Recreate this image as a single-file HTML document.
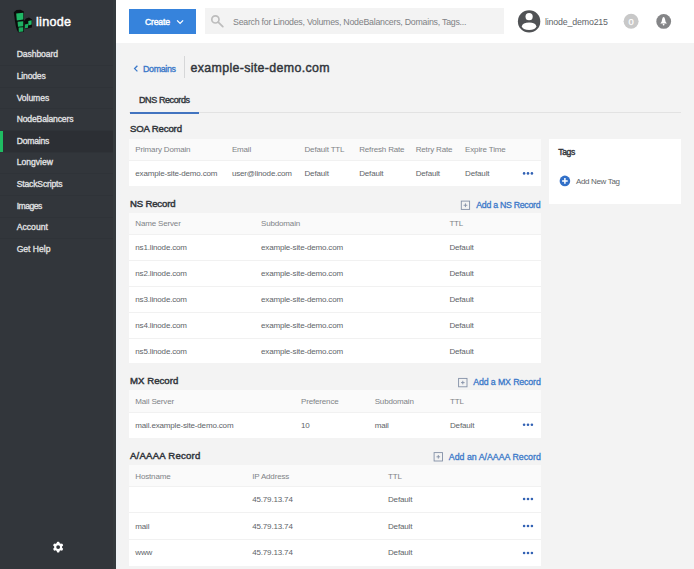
<!DOCTYPE html>
<html><head><meta charset="utf-8">
<style>
html,body{margin:0;padding:0;}
body{width:694px;height:569px;overflow:hidden;position:relative;background:#f3f3f3;font-family:"Liberation Sans",sans-serif;}
.t{position:absolute;white-space:nowrap;}
.a{position:absolute;}
.tbl{position:absolute;left:129px;width:412px;background:#fff;}
.th{position:absolute;left:0;width:100%;background:#fafafa;}
.rl{position:absolute;left:0;width:100%;height:1px;background:#f1f1f1;}
.ns{position:absolute;left:0;width:113px;height:1px;background:#2f3338;}
</style></head><body>
<div class="a" style="left:0;top:0;width:116px;height:569px;background:#32363b"></div>
<div class="a" style="left:113px;top:0;width:3px;height:569px;background:#343a3e"></div>
<div class="a" style="left:116px;top:0;width:5px;height:569px;background:linear-gradient(to right,#eff3f7,#f3f3f3)"></div>
<div class="a" style="left:0;top:130.4px;width:113px;height:21.6px;background:#2c2f34"></div>
<div class="a" style="left:0;top:129.5px;width:3px;height:22.5px;background:#1fbc62"></div>
<div class="ns" style="top:65px"></div>
<div class="ns" style="top:87px"></div>
<div class="ns" style="top:108px"></div>
<div class="ns" style="top:130px"></div>
<div class="ns" style="top:152px"></div>
<div class="ns" style="top:173px"></div>
<div class="ns" style="top:195px"></div>
<div class="ns" style="top:217px"></div>
<div class="ns" style="top:238px"></div>
<!-- logo -->
<svg class="a" style="left:0;top:0" width="40" height="40" viewBox="0 0 40 40">
  <polygon points="13.8,12.2 16.5,10 20.5,9.8 23.9,11.4 23.9,32 18.2,32.3 16.8,29.5 15.8,26 14.8,20" fill="#0b0d0c"/>
  <polygon points="16.2,13.6 23.3,12.8 23.3,19.6 16.8,20.4" fill="#20b866"/>
  <polygon points="17.6,21.8 23.2,21.2 23.2,26.2 18,26.8" fill="#1db162"/>
  <polygon points="18.6,27.6 23.2,27.2 23.2,31.6 18.8,32" fill="#1bab5d"/>
  <polygon points="24,21 26,18.6 29,17.6 32.1,19.4 31.9,27.6 27.6,28.6 24.6,28.5" fill="#0b0d0c"/>
  <polygon points="28.3,21 31.6,20.2 31.6,24.6 28.3,25.4" fill="#20b866"/>
  <polygon points="24.9,24.6 28,23.8 28,27.8 24.9,28.2" fill="#1bab5d"/>
</svg>
<!-- gear -->
<svg class="a" style="left:50px;top:539px" width="16" height="16" viewBox="0 0 16 16">
  <g transform="translate(8.15,8.1)" fill="#fff">
    <circle r="4"/>
    <rect x="-1.35" y="-5.3" width="2.7" height="10.6" rx="0.9"/>
    <rect x="-1.35" y="-5.3" width="2.7" height="10.6" rx="0.9" transform="rotate(60)"/>
    <rect x="-1.35" y="-5.3" width="2.7" height="10.6" rx="0.9" transform="rotate(120)"/>
    <circle r="1.9" fill="#32363b"/>
  </g>
</svg>

<div class="a" style="left:116px;top:0;width:578px;height:42.5px;background:#fff"></div>
<div class="a" style="left:129px;top:9px;width:67px;height:25px;background:#3683dc"></div>
<svg class="a" style="left:170px;top:15px" width="20" height="15" viewBox="170 15 20 15"><polyline points="177.1,20.4 180.1,23.4 183.1,20.4" fill="none" stroke="#fff" stroke-width="1.3"/></svg>
<div class="a" style="left:205px;top:8px;width:299px;height:25.5px;background:#f3f3f3"></div>
<svg class="a" style="left:205px;top:8px" width="25" height="25" viewBox="205 8 25 25">
  <circle cx="215.4" cy="19.4" r="3.6" fill="none" stroke="#bdbdbd" stroke-width="1.7"/>
  <line x1="218.2" y1="22.2" x2="222.8" y2="26.6" stroke="#bdbdbd" stroke-width="1.8" stroke-linecap="round"/>
</svg>
<svg class="a" style="left:515px;top:8px" width="30" height="28" viewBox="515 8 30 28">
  <defs><clipPath id="av"><circle cx="529.1" cy="21.4" r="11.2"/></clipPath></defs>
  <circle cx="529.1" cy="21.4" r="11.2" fill="#505255"/>
  <circle cx="529.1" cy="16.7" r="3.6" fill="#fff"/>
  <ellipse cx="529.1" cy="26.3" rx="7.2" ry="3.8" fill="#fff" clip-path="url(#av)"/>
</svg>
<svg class="a" style="left:620px;top:10px" width="60" height="24" viewBox="620 10 60 24">
  <circle cx="631.1" cy="21.3" r="7.5" fill="#c8c8c8"/>
  <text x="631.1" y="24.6" font-family="Liberation Sans" font-size="9.4" fill="#fff" text-anchor="middle" stroke="#fff" stroke-width="0.25">0</text>
  <circle cx="663.7" cy="21.4" r="7.4" fill="#848587"/>
  <path d="M663.6,17.1 Q662.6,17.3 662.2,18.9 L661.6,21.8 L660.3,23.6 L666.9,23.6 L665.6,21.8 L665,18.9 Q664.6,17.3 663.6,17.1 Z" fill="#fff"/>
  <circle cx="663.6" cy="24.6" r="0.9" fill="#fff"/>
</svg>

<!-- breadcrumb -->
<svg class="a" style="left:130px;top:60px" width="12" height="16" viewBox="130 60 12 16"><polyline points="137.4,65.8 134.6,68.6 137.4,71.4" fill="none" stroke="#3a78c9" stroke-width="1.3"/></svg>
<div class="a" style="left:184px;top:56px;width:1px;height:22px;background:#d6d7d8"></div>
<!-- tabs -->
<div class="a" style="left:129px;top:112px;width:552px;height:1px;background:#e2e2e2"></div>
<div class="a" style="left:129.6px;top:111.8px;width:69px;height:1.8px;background:#4274c0"></div>

<!-- SOA table -->
<div class="tbl" style="top:139px;height:47px">
  <div class="th" style="top:0;height:20.5px"></div>
  <div class="rl" style="top:20.5px"></div>
</div>
<!-- tags panel -->
<div class="a" style="left:549px;top:139px;width:132px;height:64.5px;background:#fff"></div>
<svg class="a" style="left:555px;top:172px" width="20" height="18" viewBox="555 172 20 18">
  <circle cx="564.9" cy="180.9" r="5.3" fill="#3270c8"/>
  <path d="M564.9,178.1 V183.7 M562.1,180.9 H567.7" stroke="#fff" stroke-width="1.5"/>
</svg>

<!-- NS table -->
<div class="tbl" style="top:212.5px;height:150.5px">
  <div class="th" style="top:0;height:21.5px"></div>
  <div class="rl" style="top:21.5px"></div>
  <div class="rl" style="top:47px"></div>
  <div class="rl" style="top:73px"></div>
  <div class="rl" style="top:99px"></div>
  <div class="rl" style="top:125px"></div>
</div>
<!-- MX table -->
<div class="tbl" style="top:390px;height:48px">
  <div class="th" style="top:0;height:21.5px"></div>
  <div class="rl" style="top:21.5px"></div>
</div>
<!-- A table -->
<div class="tbl" style="top:465px;height:100.5px">
  <div class="th" style="top:0;height:20.5px"></div>
  <div class="rl" style="top:20.5px"></div>
  <div class="rl" style="top:47px"></div>
  <div class="rl" style="top:73.5px"></div>
</div>

<!-- icons: add squares and dots -->
<svg class="a" style="left:0;top:0" width="694" height="569" viewBox="0 0 694 569">
  <g fill="none" stroke="#8390a6" stroke-width="0.9">
    <rect x="461.3" y="201.1" width="8.3" height="8.3"/>
    <path d="M465.45,203.4 V207.1 M463.6,205.25 H467.3"/>
    <rect x="458.6" y="378.4" width="8.4" height="8.4"/>
    <path d="M462.8,380.8 V384.4 M461,382.6 H464.6"/>
    <rect x="434.1" y="452.6" width="8.4" height="8.4"/>
    <path d="M438.3,455 V458.6 M436.5,456.8 H440.1"/>
  </g>
  <g fill="#3262b4">
    <circle cx="524.1" cy="173.4" r="1.3"/><circle cx="528" cy="173.4" r="1.3"/><circle cx="531.9" cy="173.4" r="1.3"/>
    <circle cx="524.1" cy="424.8" r="1.3"/><circle cx="528" cy="424.8" r="1.3"/><circle cx="531.9" cy="424.8" r="1.3"/>
    <circle cx="524.1" cy="499" r="1.3"/><circle cx="528" cy="499" r="1.3"/><circle cx="531.9" cy="499" r="1.3"/>
    <circle cx="524.1" cy="526" r="1.3"/><circle cx="528" cy="526" r="1.3"/><circle cx="531.9" cy="526" r="1.3"/>
    <circle cx="524.1" cy="553" r="1.3"/><circle cx="528" cy="553" r="1.3"/><circle cx="531.9" cy="553" r="1.3"/>
  </g>
</svg>
<div class="t" style="left:36px;top:16px;font-size:12.6px;line-height:12.6px;color:#fff;-webkit-text-stroke:0.45px #fff;letter-spacing:0.275px;">linode</div>
<div class="t" style="left:16.7px;top:50px;font-size:8.6px;line-height:8.6px;color:#dcdddf;-webkit-text-stroke:0.4px #dcdddf;letter-spacing:-0.093px;">Dashboard</div>
<div class="t" style="left:16.7px;top:72px;font-size:8.6px;line-height:8.6px;color:#dcdddf;-webkit-text-stroke:0.4px #dcdddf;letter-spacing:-0.168px;">Linodes</div>
<div class="t" style="left:16.7px;top:94px;font-size:8.6px;line-height:8.6px;color:#dcdddf;-webkit-text-stroke:0.4px #dcdddf;letter-spacing:-0.078px;">Volumes</div>
<div class="t" style="left:16.7px;top:115px;font-size:8.6px;line-height:8.6px;color:#dcdddf;-webkit-text-stroke:0.4px #dcdddf;letter-spacing:-0.164px;">NodeBalancers</div>
<div class="t" style="left:16.7px;top:137px;font-size:8.6px;line-height:8.6px;color:#dcdddf;-webkit-text-stroke:0.4px #dcdddf;letter-spacing:-0.204px;">Domains</div>
<div class="t" style="left:16.7px;top:158px;font-size:8.6px;line-height:8.6px;color:#dcdddf;-webkit-text-stroke:0.4px #dcdddf;letter-spacing:-0.016px;">Longview</div>
<div class="t" style="left:16.7px;top:180px;font-size:8.6px;line-height:8.6px;color:#dcdddf;-webkit-text-stroke:0.4px #dcdddf;letter-spacing:-0.170px;">StackScripts</div>
<div class="t" style="left:16.7px;top:202px;font-size:8.6px;line-height:8.6px;color:#dcdddf;-webkit-text-stroke:0.4px #dcdddf;letter-spacing:-0.518px;">Images</div>
<div class="t" style="left:16.7px;top:223px;font-size:8.6px;line-height:8.6px;color:#dcdddf;-webkit-text-stroke:0.4px #dcdddf;letter-spacing:0.023px;">Account</div>
<div class="t" style="left:16.7px;top:245px;font-size:8.6px;line-height:8.6px;color:#dcdddf;-webkit-text-stroke:0.4px #dcdddf;letter-spacing:-0.017px;">Get Help</div>
<div class="t" style="left:145px;top:18px;font-size:8.7px;line-height:8.7px;color:#fff;-webkit-text-stroke:0.4px #fff;letter-spacing:-0.216px;">Create</div>
<div class="t" style="left:233px;top:18px;font-size:8.8px;line-height:8.8px;color:#808285;letter-spacing:-0.242px;">Search for Linodes, Volumes, NodeBalancers, Domains, Tags...</div>
<div class="t" style="left:545px;top:18px;font-size:8.8px;line-height:8.8px;color:#606468;letter-spacing:-0.159px;">linode_demo215</div>
<div class="t" style="left:143px;top:65px;font-size:8.9px;line-height:8.9px;color:#3a78c9;-webkit-text-stroke:0.35px #3a78c9;letter-spacing:-0.339px;">Domains</div>
<div class="t" style="left:190.5px;top:62px;font-size:12.4px;line-height:12.4px;color:#32363c;-webkit-text-stroke:0.45px #32363c;letter-spacing:0.339px;">example-site-demo.com</div>
<div class="t" style="left:139px;top:96px;font-size:9px;line-height:9px;color:#32363c;-webkit-text-stroke:0.4px #32363c;letter-spacing:-0.402px;">DNS Records</div>
<div class="t" style="left:130px;top:124px;font-size:9.6px;line-height:9.6px;color:#32363c;-webkit-text-stroke:0.45px #32363c;letter-spacing:-0.148px;">SOA Record</div>
<div class="t" style="left:130px;top:199px;font-size:9.6px;line-height:9.6px;color:#32363c;-webkit-text-stroke:0.45px #32363c;letter-spacing:-0.178px;">NS Record</div>
<div class="t" style="left:130px;top:376px;font-size:9.6px;line-height:9.6px;color:#32363c;-webkit-text-stroke:0.45px #32363c;letter-spacing:0.039px;">MX Record</div>
<div class="t" style="left:130px;top:451px;font-size:9.6px;line-height:9.6px;color:#32363c;-webkit-text-stroke:0.45px #32363c;letter-spacing:0.214px;">A/AAAA Record</div>
<div class="t" style="left:558.3px;top:148px;font-size:8.6px;line-height:8.6px;color:#32363c;-webkit-text-stroke:0.4px #32363c;letter-spacing:-0.385px;">Tags</div>
<div class="t" style="left:576px;top:178px;font-size:8px;line-height:8px;color:#606468;letter-spacing:-0.344px;">Add New Tag</div>
<div class="t" style="left:476.3px;top:201px;font-size:8.8px;line-height:8.8px;color:#3a78c9;-webkit-text-stroke:0.3px #3a78c9;letter-spacing:-0.298px;">Add a NS Record</div>
<div class="t" style="left:473.3px;top:378px;font-size:8.8px;line-height:8.8px;color:#3a78c9;-webkit-text-stroke:0.3px #3a78c9;letter-spacing:-0.138px;">Add a MX Record</div>
<div class="t" style="left:448.8px;top:453px;font-size:8.8px;line-height:8.8px;color:#3a78c9;-webkit-text-stroke:0.3px #3a78c9;letter-spacing:0.003px;">Add an A/AAAA Record</div>
<div class="t" style="left:135.3px;top:146px;font-size:8px;line-height:8px;color:#808387;letter-spacing:-0.160px;">Primary Domain</div>
<div class="t" style="left:231.9px;top:146px;font-size:8px;line-height:8px;color:#808387;letter-spacing:-0.160px;">Email</div>
<div class="t" style="left:304.5px;top:146px;font-size:8px;line-height:8px;color:#808387;letter-spacing:-0.160px;">Default TTL</div>
<div class="t" style="left:359.2px;top:146px;font-size:8px;line-height:8px;color:#808387;letter-spacing:-0.160px;">Refresh Rate</div>
<div class="t" style="left:415.7px;top:146px;font-size:8px;line-height:8px;color:#808387;letter-spacing:-0.160px;">Retry Rate</div>
<div class="t" style="left:465.1px;top:146px;font-size:8px;line-height:8px;color:#808387;letter-spacing:-0.160px;">Expire Time</div>
<div class="t" style="left:135.3px;top:170px;font-size:8px;line-height:8px;color:#606468;letter-spacing:-0.160px;">example-site-demo.com</div>
<div class="t" style="left:231.9px;top:170px;font-size:8px;line-height:8px;color:#606468;letter-spacing:-0.160px;">user@linode.com</div>
<div class="t" style="left:304.5px;top:170px;font-size:8px;line-height:8px;color:#606468;letter-spacing:-0.160px;">Default</div>
<div class="t" style="left:359.2px;top:170px;font-size:8px;line-height:8px;color:#606468;letter-spacing:-0.160px;">Default</div>
<div class="t" style="left:415.7px;top:170px;font-size:8px;line-height:8px;color:#606468;letter-spacing:-0.160px;">Default</div>
<div class="t" style="left:465.1px;top:170px;font-size:8px;line-height:8px;color:#606468;letter-spacing:-0.160px;">Default</div>
<div class="t" style="left:135.3px;top:220px;font-size:8px;line-height:8px;color:#808387;letter-spacing:-0.160px;">Name Server</div>
<div class="t" style="left:261px;top:220px;font-size:8px;line-height:8px;color:#808387;letter-spacing:-0.160px;">Subdomain</div>
<div class="t" style="left:449.4px;top:220px;font-size:8px;line-height:8px;color:#808387;letter-spacing:-0.160px;">TTL</div>
<div class="t" style="left:135.3px;top:244px;font-size:8px;line-height:8px;color:#606468;letter-spacing:-0.160px;">ns1.linode.com</div>
<div class="t" style="left:261px;top:244px;font-size:8px;line-height:8px;color:#606468;letter-spacing:-0.160px;">example-site-demo.com</div>
<div class="t" style="left:449.4px;top:244px;font-size:8px;line-height:8px;color:#606468;letter-spacing:-0.160px;">Default</div>
<div class="t" style="left:135.3px;top:270px;font-size:8px;line-height:8px;color:#606468;letter-spacing:-0.160px;">ns2.linode.com</div>
<div class="t" style="left:261px;top:270px;font-size:8px;line-height:8px;color:#606468;letter-spacing:-0.160px;">example-site-demo.com</div>
<div class="t" style="left:449.4px;top:270px;font-size:8px;line-height:8px;color:#606468;letter-spacing:-0.160px;">Default</div>
<div class="t" style="left:135.3px;top:296px;font-size:8px;line-height:8px;color:#606468;letter-spacing:-0.160px;">ns3.linode.com</div>
<div class="t" style="left:261px;top:296px;font-size:8px;line-height:8px;color:#606468;letter-spacing:-0.160px;">example-site-demo.com</div>
<div class="t" style="left:449.4px;top:296px;font-size:8px;line-height:8px;color:#606468;letter-spacing:-0.160px;">Default</div>
<div class="t" style="left:135.3px;top:322px;font-size:8px;line-height:8px;color:#606468;letter-spacing:-0.160px;">ns4.linode.com</div>
<div class="t" style="left:261px;top:322px;font-size:8px;line-height:8px;color:#606468;letter-spacing:-0.160px;">example-site-demo.com</div>
<div class="t" style="left:449.4px;top:322px;font-size:8px;line-height:8px;color:#606468;letter-spacing:-0.160px;">Default</div>
<div class="t" style="left:135.3px;top:348px;font-size:8px;line-height:8px;color:#606468;letter-spacing:-0.160px;">ns5.linode.com</div>
<div class="t" style="left:261px;top:348px;font-size:8px;line-height:8px;color:#606468;letter-spacing:-0.160px;">example-site-demo.com</div>
<div class="t" style="left:449.4px;top:348px;font-size:8px;line-height:8px;color:#606468;letter-spacing:-0.160px;">Default</div>
<div class="t" style="left:135.3px;top:398px;font-size:8px;line-height:8px;color:#808387;letter-spacing:-0.160px;">Mail Server</div>
<div class="t" style="left:301px;top:398px;font-size:8px;line-height:8px;color:#808387;letter-spacing:-0.160px;">Preference</div>
<div class="t" style="left:374.7px;top:398px;font-size:8px;line-height:8px;color:#808387;letter-spacing:-0.160px;">Subdomain</div>
<div class="t" style="left:450px;top:398px;font-size:8px;line-height:8px;color:#808387;letter-spacing:-0.160px;">TTL</div>
<div class="t" style="left:135.3px;top:422px;font-size:8px;line-height:8px;color:#606468;letter-spacing:-0.160px;">mail.example-site-demo.com</div>
<div class="t" style="left:301px;top:422px;font-size:8px;line-height:8px;color:#606468;letter-spacing:-0.160px;">10</div>
<div class="t" style="left:374.7px;top:422px;font-size:8px;line-height:8px;color:#606468;letter-spacing:-0.160px;">mail</div>
<div class="t" style="left:450px;top:422px;font-size:8px;line-height:8px;color:#606468;letter-spacing:-0.160px;">Default</div>
<div class="t" style="left:135.3px;top:473px;font-size:8px;line-height:8px;color:#808387;letter-spacing:-0.160px;">Hostname</div>
<div class="t" style="left:252.2px;top:473px;font-size:8px;line-height:8px;color:#808387;letter-spacing:-0.160px;">IP Address</div>
<div class="t" style="left:388px;top:473px;font-size:8px;line-height:8px;color:#808387;letter-spacing:-0.160px;">TTL</div>
<div class="t" style="left:252.2px;top:496px;font-size:8px;line-height:8px;color:#606468;letter-spacing:-0.160px;">45.79.13.74</div>
<div class="t" style="left:388px;top:496px;font-size:8px;line-height:8px;color:#606468;letter-spacing:-0.160px;">Default</div>
<div class="t" style="left:135.3px;top:523px;font-size:8px;line-height:8px;color:#606468;letter-spacing:-0.160px;">mail</div>
<div class="t" style="left:252.2px;top:523px;font-size:8px;line-height:8px;color:#606468;letter-spacing:-0.160px;">45.79.13.74</div>
<div class="t" style="left:388px;top:523px;font-size:8px;line-height:8px;color:#606468;letter-spacing:-0.160px;">Default</div>
<div class="t" style="left:135.3px;top:549px;font-size:8px;line-height:8px;color:#606468;letter-spacing:-0.160px;">www</div>
<div class="t" style="left:252.2px;top:549px;font-size:8px;line-height:8px;color:#606468;letter-spacing:-0.160px;">45.79.13.74</div>
<div class="t" style="left:388px;top:549px;font-size:8px;line-height:8px;color:#606468;letter-spacing:-0.160px;">Default</div>
</body></html>
